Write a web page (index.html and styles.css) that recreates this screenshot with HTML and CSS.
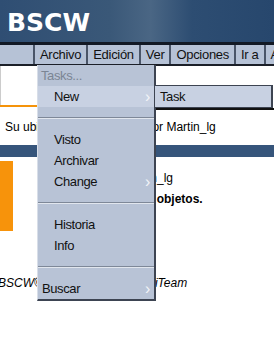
FILE: index.html
```html
<!DOCTYPE html>
<html lang="es">
<head>
    <meta charset="UTF-8">
    <title>BSCW</title>
    <link rel="stylesheet" href="styles.css">
</head>
<body>
    <header class="banner">
        <div class="logo">BSCW</div>
    </header>
    <nav class="menubar">
        <div class="menu-spacer"></div>
        <div class="menu-item">Archivo</div>
        <div class="menu-item">Edición</div>
        <div class="menu-item">Ver</div>
        <div class="menu-item">Opciones</div>
        <div class="menu-item">Ir a</div>
        <div class="menu-item">Ayuda</div>
    </nav>
    <div class="toolbar"></div>
    <div class="rule">
        <div class="rule-orange"></div>
        <div class="rule-black"></div>
    </div>
    <div class="location">Su ubicación: &nbsp;:/ Carpetas por Martin_lg</div>
    <div class="titlebar"></div>
    <div class="content">
        <div class="orange-block"></div>
        <div class="content-text">
            <p class="greeting">Usuario Martin_lg</p>
            <p class="bold">Carpeta sin objetos.</p>
        </div>
    </div>
    <div class="footer">BSCW© 1995–2005 FIT/OrbiTeam</div>

    <!-- Dropdown menu -->
    <div class="dropdown">
        <div class="dd-item dd-title">Tasks...</div>
        <div class="dd-item dd-active">New <span class="arrow">&#8250;</span></div>
        <div class="dd-sep"></div>
        <div class="dd-item">Visto</div>
        <div class="dd-item">Archivar</div>
        <div class="dd-item">Change <span class="arrow">&#8250;</span></div>
        <div class="dd-sep"></div>
        <div class="dd-item">Historia</div>
        <div class="dd-item">Info</div>
        <div class="dd-sep"></div>
        <div class="dd-item dd-search">Buscar <span class="arrow">&#8250;</span></div>
    </div>
    <div class="submenu">
        <div class="dd-item">Task</div>
    </div>
</body>
</html>
```

FILE: styles.css
```css
/* General Styles */
body {
    margin: 0;
    font-family: "Liberation Sans", Arial, sans-serif;
    font-size: 12px;
    background: white;
    color: black;
    width: 274px;
    height: 341px;
    overflow: hidden;
    position: relative;
}
.banner {
    height: 42px;
    background: linear-gradient(90deg, #2f4e73 0%, #3a5878 40%, #4a6684 55%, #2d4d72 70%, #27476d 100%);
    border-bottom: 3px solid #121925;
}
.logo {
    color: white;
    font-family: "DejaVu Sans", sans-serif;
    font-weight: bold;
    font-size: 25px;
    padding: 8px 0 0 7px;
}
.menubar {
    display: flex;
    height: 19px;
    background: #b6c2d6;
    border-bottom: 2px solid #1b1f28;
    white-space: nowrap;
}
.menu-spacer {
    width: 33px;
    flex: none;
}
.menu-item {
    flex: none;
    border-left: 2px solid #4a5568;
    padding: 2px 5px 0 5px;
    font-size: 13px;
    letter-spacing: -0.3px;
    color: #111;
}
.toolbar {
    height: 39px;
    border-left: 1px solid #ccc;
}
.rule {
    display: flex;
    height: 5px;
}
.rule-orange {
    width: 40px;
    height: 2px;
    background: #f5930a;
}
.rule-black {
    flex: 1;
    height: 2px;
    margin-top: 3px;
    background: #111;
}
.location {
    height: 35px;
    line-height: 34px;
    padding-left: 5px;
    font-size: 12px;
    white-space: nowrap;
}
.titlebar {
    height: 12px;
    background: #36557b;
}
.content {
    display: flex;
    height: 128px;
}
.orange-block {
    width: 13px;
    height: 70px;
    margin-top: 4px;
    background: #f7930b;
    flex: none;
}
.content-text {
    padding-top: 14px;
}
.content-text p {
    margin: 0 0 7px 0;
    font-size: 12px;
    white-space: nowrap;
}
.greeting {
    padding-left: 66px;
}
.bold {
    font-weight: bold;
    padding-left: 75px;
}
.footer {
    font-style: italic;
    font-size: 12px;
    margin-left: -2px;
    margin-top: -9px;
    word-spacing: 2px;
    white-space: nowrap;
}

/* Dropdown */
.dropdown {
    position: absolute;
    left: 37px;
    top: 65px;
    width: 116px;
    height: 234px;
    background: #b8c3d6;
    border-right: 2px solid #3d4452;
    border-bottom: 2px solid #3d4452;
    border-left: 1px solid #d8dee8;
}
.dd-item {
    position: relative;
    height: 21px;
    line-height: 21px;
    padding-left: 16px;
    font-size: 13px;
    letter-spacing: -0.4px;
    color: #111;
}
.dd-title {
    padding-left: 3px;
    color: #7b8594;
}
.dd-active {
    background: #c8d1e2;
}
.dd-sep {
    height: 22px;
    position: relative;
}
.dd-sep::after {
    content: "";
    position: absolute;
    left: 0;
    right: 0;
    top: 10px;
    border-top: 1px solid #7e8898;
    border-bottom: 1px solid #e1e6ee;
}
.dd-search {
    padding-left: 4px;
}
.arrow {
    position: absolute;
    right: 4px;
    top: 0;
    color: #f2f4f8;
    font-size: 16px;
}
.submenu {
    position: absolute;
    left: 154px;
    top: 85px;
    width: 116px;
    background: #c8d1e2;
    border: 1px solid #3d4452;
    border-right-width: 2px;
}
.submenu .dd-item {
    padding-left: 5px;
}
```
